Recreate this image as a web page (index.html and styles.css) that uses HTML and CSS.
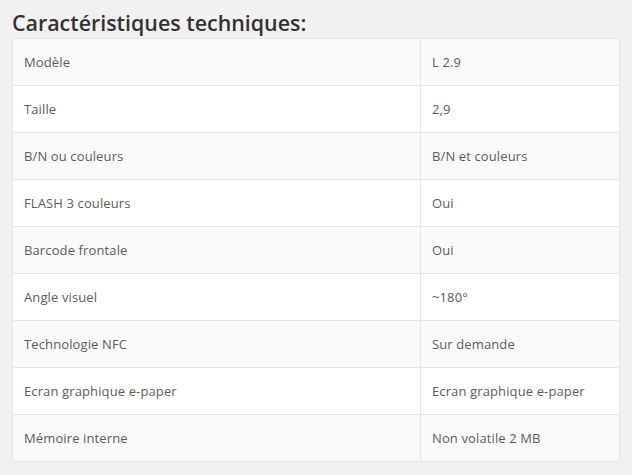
FILE: index.html
```html
<!DOCTYPE html>
<html lang="fr">
<head>
<meta charset="utf-8">
<link rel="stylesheet" href="styles.css">
</head>
<body>
<div class="wrap">
  <h2 class="title">Caractéristiques techniques:</h2>
  <table class="specs">
    <tr><td>Modèle</td><td>L 2.9</td></tr>
    <tr><td>Taille</td><td>2,9</td></tr>
    <tr><td>B/N ou couleurs</td><td>B/N et couleurs</td></tr>
    <tr><td>FLASH 3 couleurs</td><td>Oui</td></tr>
    <tr><td>Barcode frontale</td><td>Oui</td></tr>
    <tr><td>Angle visuel</td><td>~180°</td></tr>
    <tr><td>Technologie NFC</td><td>Sur demande</td></tr>
    <tr><td>Ecran graphique e-paper</td><td>Ecran graphique e-paper</td></tr>
    <tr><td>Mémoire interne</td><td>Non volatile 2 MB</td></tr>
  </table>
</div>
</body>
</html>
```
FILE: styles.css
```css
html, body {
  margin: 0;
  padding: 0;
  background: #f1f1f1;
}
body {
  font-family: "Open Sans", "Liberation Sans", sans-serif;
  color: #555;
}
.wrap {
  padding: 8px 12px 0 12px;
}
.title {
  margin: 0;
  font-size: 21.4px;
  font-weight: 600;
  line-height: 30px;
  color: #333;
}
.specs {
  width: 608px;
  border-collapse: collapse;
  table-layout: fixed;
}
.specs td {
  height: 46px;
  padding: 0 11px;
  border: 1px solid #e6e6e6;
  font-size: 13px;
  letter-spacing: 0.12px;
  color: #5c5c5c;
  vertical-align: middle;
}
.specs td:first-child {
  width: 385px;
}
.specs tr:nth-child(odd) td {
  background: #fafafa;
}
.specs tr:nth-child(even) td {
  background: #ffffff;
}
```
